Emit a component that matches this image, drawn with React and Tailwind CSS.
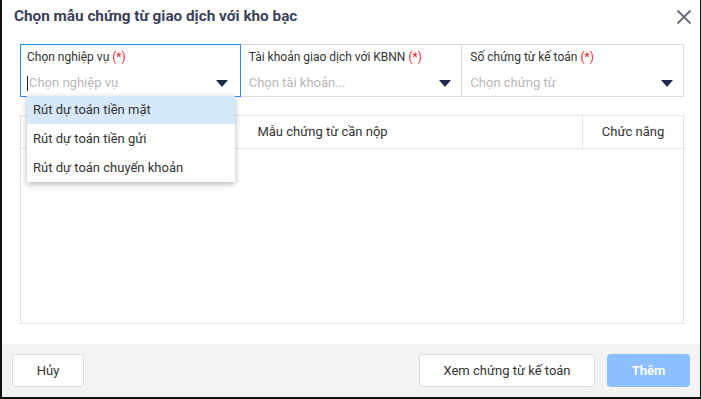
import React from "react";

const Caret = () => (
  <svg width="12" height="7" viewBox="0 0 12 7" className="shrink-0">
    <path d="M0 0 L12 0 L6 7 Z" fill="#1e2a4a" />
  </svg>
);

function Field({ label, placeholder, active, cursor, className }) {
  return (
    <div
      className={`h-[53px] border ${active ? "border-[#2b8bf2] relative z-10" : "border-[#dcdcdc]"} pt-[4px] flex flex-col ${className}`}
    >
      <div className="text-[12px] leading-[16px] text-[#333] whitespace-nowrap">
        {label} <span className="text-[#f5222d]">(*)</span>
      </div>
      <div className="mt-[9px] flex items-center justify-between">
        <div className="flex items-center text-[13px] leading-[18px] text-[#b8b8b8] whitespace-nowrap">
          {cursor && <span className="w-px h-[15px] bg-[#222] mr-px" />}
          {placeholder}
        </div>
        <Caret />
      </div>
    </div>
  );
}

export default function App() {
  return (
    <div
      className="w-[701px] h-[399px] bg-white border-l-2 border-r border-b-2 border-[#111] flex flex-col relative"
      style={{ fontFamily: "Roboto, 'Noto Sans', sans-serif" }}
    >
      <div className="flex items-center justify-between pl-[12px] pr-[8px] h-[32px] pt-[1px]">
        <div className="text-[15.3px] font-bold text-[#3a3f5a]">
          Chọn mẫu chứng từ giao dịch với kho bạc
        </div>
        <svg width="16" height="16" viewBox="0 0 16 16">
          <path d="M1.5 1.5 L14.5 14.5 M14.5 1.5 L1.5 14.5" stroke="#6b6b76" strokeWidth="1.8" />
        </svg>
      </div>

      <div className="flex-1 px-[18px] pt-[12px] relative">
        <div className="flex w-[664px]">
          <Field className="w-[221px] pl-[6px] pr-[12px]" label="Chọn nghiệp vụ" placeholder="Chọn nghiệp vụ" active cursor />
          <Field className="w-[223px] -ml-px pl-[8px] pr-[10px]" label="Tài khoản giao dịch với KBNN" placeholder="Chọn tài khoản..." />
          <Field className="w-[223px] -ml-px pl-[8px] pr-[10px]" label="Số chứng từ kế toán" placeholder="Chọn chứng từ" />
        </div>

        <div className="mt-[18px] w-[664px] h-[209px] border border-[#e3e3e3] flex flex-col">
          <div className="h-[33px] border-b border-[#e3e3e3] flex text-[13px] text-[#333]">
            <div className="flex-1 flex items-center justify-center pl-[42px]">Mẫu chứng từ cần nộp</div>
            <div className="w-[101px] border-l border-[#e3e3e3] flex items-center justify-center">Chức năng</div>
          </div>
        </div>

        <div className="absolute left-[25px] top-[64px] w-[208px] bg-white shadow-[0_2px_6px_rgba(0,0,0,0.3)] text-[13px] text-[#333] z-20">
          <div className="h-[28px] flex items-center pl-[6px] bg-[#d6e8fc]">Rút dự toán tiền mặt</div>
          <div className="h-[29px] flex items-center pl-[6px]">Rút dự toán tiền gửi</div>
          <div className="h-[29px] flex items-center pl-[6px]">Rút dự toán chuyển khoản</div>
        </div>
      </div>

      <div className="h-[53px] bg-[#f3f3f3] flex items-center justify-between pl-[10px] pr-[10px]">
        <button className="w-[72px] h-[33px] bg-white border border-[#dcdcdc] rounded-[4px] text-[13px] text-[#333]">
          Hủy
        </button>
        <div className="flex gap-[12px]">
          <button className="w-[176px] h-[33px] bg-white border border-[#dcdcdc] rounded-[4px] text-[13px] text-[#333]">
            Xem chứng từ kế toán
          </button>
          <button className="w-[83px] h-[33px] bg-[#8cbfff] rounded-[4px] text-[13px] font-semibold text-white">
            Thêm
          </button>
        </div>
      </div>
    </div>
  );
}
